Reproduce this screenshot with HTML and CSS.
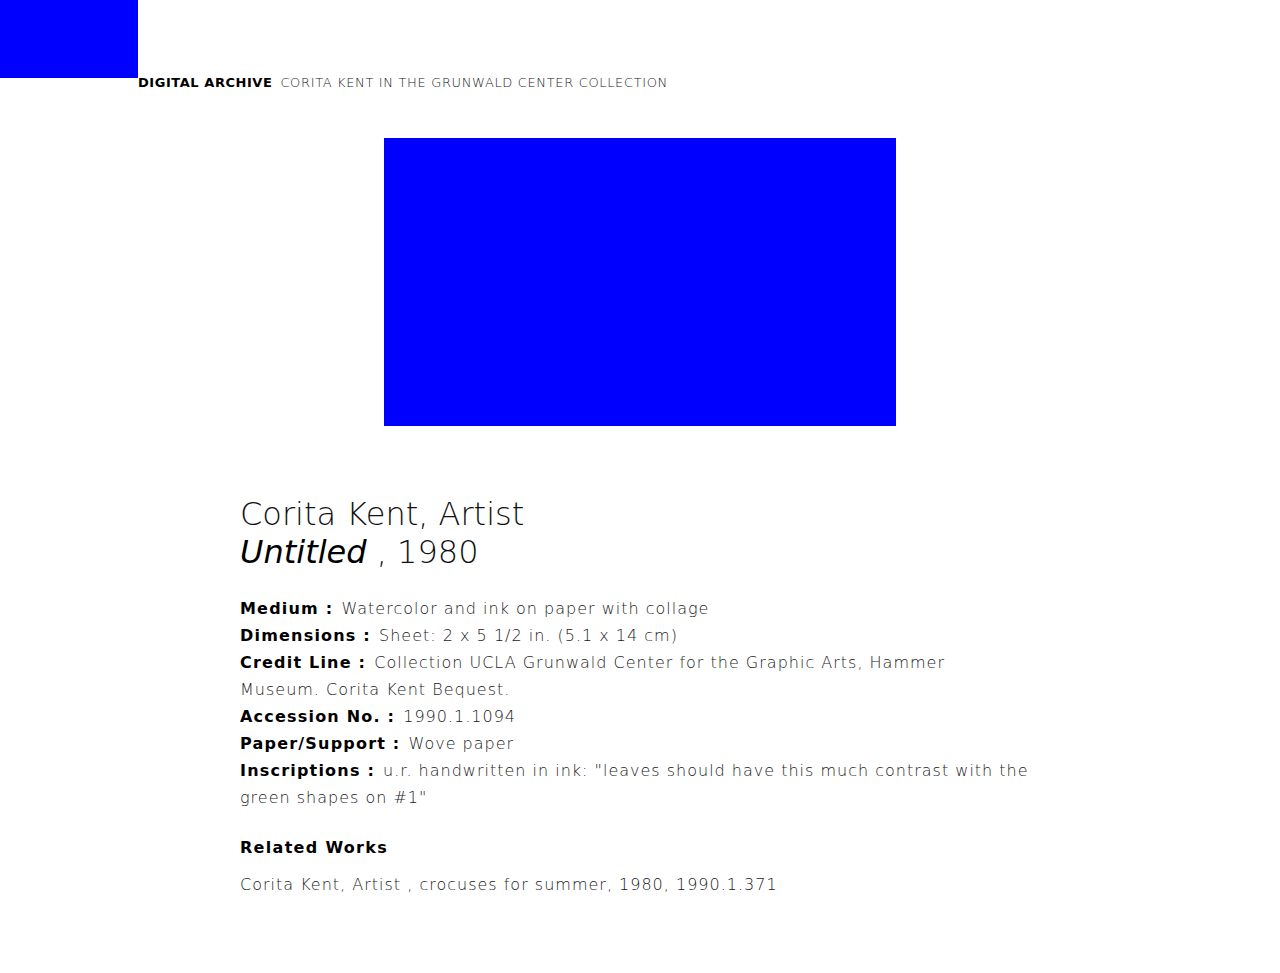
FILE: index.html
```html
<!DOCTYPE html>
<html>
<head>
<meta charset="utf-8">
<link rel="stylesheet" href="styles.css">
</head>
<body>
<header class="site-header">
  <div class="logo"></div>
  <div class="nav-line">
    <span class="brand">DIGITAL ARCHIVE</span>
    <span class="collection">CORITA KENT IN THE GRUNWALD CENTER COLLECTION</span>
  </div>
</header>
<main class="record">
  <div class="artwork"></div>
  <section class="details">
    <h1 class="artist">Corita Kent, Artist</h1>
    <h2 class="work"><em class="work-title">Untitled</em> , 1980</h2>
    <dl class="fields">
      <div class="field"><dt>Medium :</dt> <dd>Watercolor and ink on paper with collage</dd></div>
      <div class="field"><dt>Dimensions :</dt> <dd>Sheet: 2 x 5 1/2 in. (5.1 x 14 cm)</dd></div>
      <div class="field"><dt>Credit Line :</dt> <dd>Collection UCLA Grunwald Center for the Graphic Arts, Hammer Museum. Corita Kent Bequest.</dd></div>
      <div class="field"><dt>Accession No. :</dt> <dd>1990.1.1094</dd></div>
      <div class="field"><dt>Paper/Support :</dt> <dd>Wove paper</dd></div>
      <div class="field"><dt>Inscriptions :</dt> <dd>u.r. handwritten in ink: "leaves should have this much contrast with the green shapes on #1"</dd></div>
    </dl>
    <h3 class="related-heading">Related Works</h3>
    <p class="related-item">Corita Kent, Artist , crocuses for summer, 1980, 1990.1.371</p>
  </section>
</main>
</body>
</html>
```
FILE: styles.css
```css
html, body {
  margin: 0;
  padding: 0;
  background: #fff;
}
body {
  font-family: "DejaVu Sans", sans-serif;
  color: #000;
}
.site-header {
  display: flex;
  align-items: flex-end;
  height: 91px;
}
.logo {
  width: 138px;
  height: 78px;
  background: #0000ff;
  align-self: flex-start;
}
.nav-line {
  display: flex;
  align-items: baseline;
  gap: 8px;
  font-size: 13px;
  line-height: 16px;
}
.brand {
  font-weight: bold;
  letter-spacing: 0.55px;
}
.collection {
  color: #222;
  font-weight: 300;
  letter-spacing: 0.65px;
}
.record {
  display: flex;
  flex-direction: column;
  align-items: center;
  padding-top: 47px;
}
.artwork {
  width: 512px;
  height: 288px;
  background: #0000ff;
}
.details {
  width: 800px;
  margin-top: 69px;
}
.artist, .work {
  margin: 0;
  font-size: 32px;
  font-weight: 300;
  line-height: 38px;
  color: #111;
}
.work-title {
  font-style: italic;
  font-weight: normal;
  color: #000;
}
.fields {
  margin: 24px 0 0;
  width: 790px;
  font-size: 16px;
  line-height: 27px;
  letter-spacing: 1px;
}
.field {
  margin: 0;
}
.field dt {
  display: inline;
  font-weight: bold;
  color: #000;
  letter-spacing: 1.2px;
}
.field dd {
  display: inline;
  margin: 0 0 0 2px;
  font-weight: 300;
  color: #1a1a1a;
}
.related-heading {
  margin: 23px 0 0;
  font-size: 16px;
  line-height: 27px;
  font-weight: bold;
  letter-spacing: 1.3px;
}
.related-item {
  margin: 10px 0 0;
  font-size: 16px;
  line-height: 27px;
  font-weight: 300;
  color: #1a1a1a;
  letter-spacing: 1px;
}
```
